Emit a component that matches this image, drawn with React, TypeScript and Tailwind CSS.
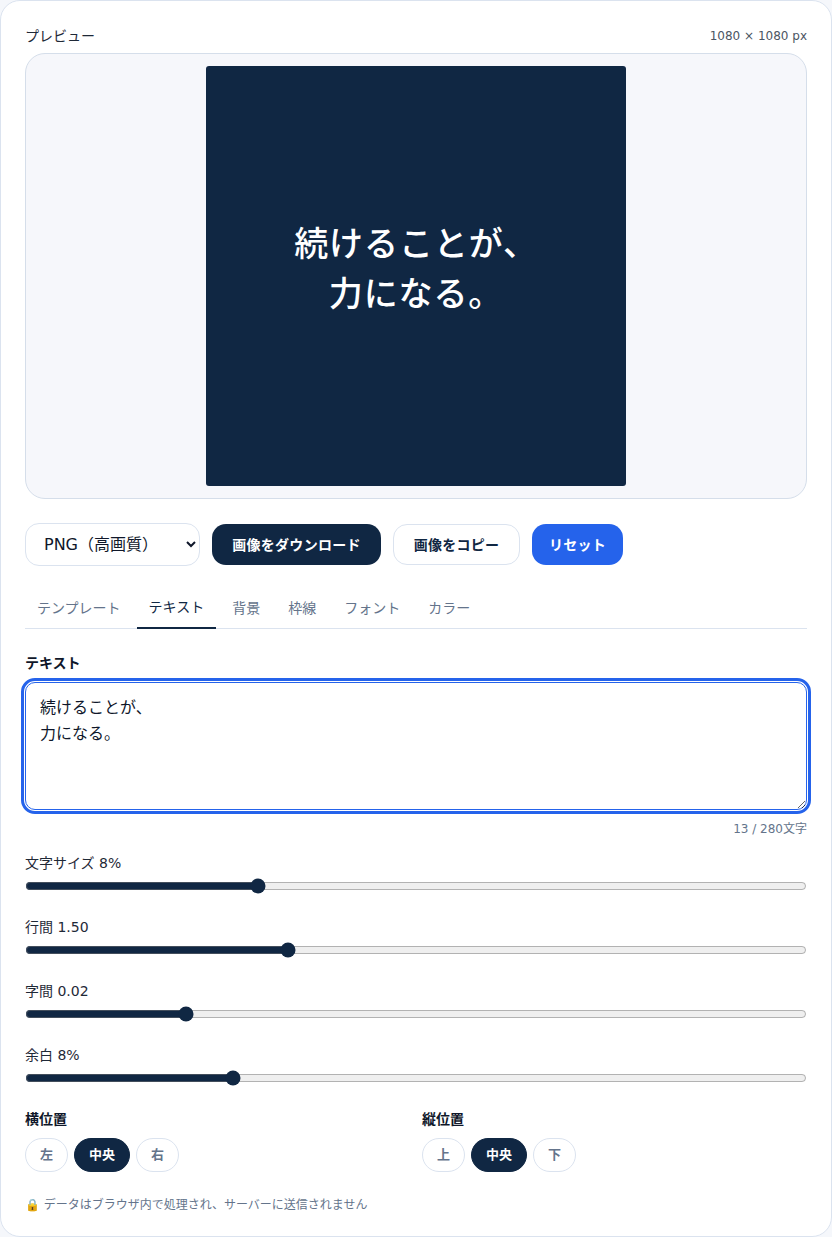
import React from "react";

const FONT = "font-['DejaVu_Sans','Noto_Sans_CJK_JP',sans-serif]";

const TABS = ["テンプレート", "テキスト", "背景", "枠線", "フォント", "カラー"];

const SLIDERS = [
  { label: "文字サイズ 8%", value: 29.4 },
  { label: "行間 1.50", value: 33.3 },
  { label: "字間 0.02", value: 20 },
  { label: "余白 8%", value: 26.1 },
];

export default function App() {
  return (
    <div className={`${FONT} bg-[#f5f7fb] text-[#0f172a]`}>
      <div className="h-[1237px] rounded-[20px] border border-[#dbe3ef] bg-white px-6 pt-[25px]">
        {/* preview */}
        <div className="flex h-[19px] items-center justify-between">
          <span className="text-sm text-[#1f2937]">プレビュー</span>
          <span className="text-xs text-[#4b5563]">1080 × 1080 px</span>
        </div>
        <div className="mt-2 flex justify-center rounded-[20px] border border-[#d5deea] bg-[#f6f7fb] p-3">
          <div className="flex h-[420px] w-[420px] items-center justify-center rounded-[3px] bg-[#102743] pb-[14px]">
            <p className="text-center text-[34px] leading-[50.4px] font-medium tracking-[0.9px] text-white">
              続けることが、
              <br />
              力になる。
            </p>
          </div>
        </div>

        {/* actions */}
        <div className="mt-6 flex items-center gap-3">
          <select className="h-[43px] w-[175px] rounded-[14px] border border-[#dbe3ef] bg-white pl-[14px] text-base text-[#0f172a]">
            <option>PNG（高画質）</option>
          </select>
          <button className="h-[41px] w-[169px] rounded-[14px] bg-[#102743] text-sm font-bold tracking-[0.28px] text-white">
            画像をダウンロード
          </button>
          <button className="h-[41px] w-[127px] rounded-[14px] border border-[#dbe3ef] bg-white text-sm font-bold tracking-[0.28px] text-[#102743]">
            画像をコピー
          </button>
          <button className="h-[41px] w-[91px] rounded-[14px] bg-[#2563eb] text-sm font-bold tracking-[0.28px] text-white">
            リセット
          </button>
        </div>

        {/* tabs */}
        <div className="mt-[21px] flex h-[42px] gap-1 border-b border-[#dbe3ef]">
          {TABS.map((t) => (
            <div
              key={t}
              className={`-mb-px flex items-center px-3 pb-px text-sm ${
                t === "テキスト"
                  ? "border-b-2 border-[#102743] text-[#102743]"
                  : "text-[#64748b]"
              }`}
            >
              {t}
            </div>
          ))}
        </div>

        {/* text */}
        <div className="mt-[25px] text-sm leading-[19px] font-bold text-[#0f172a]">テキスト</div>
        <textarea
          readOnly
          autoFocus
          className="mt-[9px] block h-[128px] w-full resize-y rounded-[10px] border border-[#2563eb] px-[14px] py-3 text-base leading-[26px] text-[#0f172a] outline-[3px] outline-offset-1 outline-[#2563eb]"
          value={"続けることが、\n力になる。"}
        />
        <div className="mt-[10px] text-right text-xs leading-[18px] text-[#64748b]">13 / 280文字</div>

        {/* sliders */}
        <div className="mt-4 flex flex-col gap-6">
          {SLIDERS.map((s) => (
            <div key={s.label}>
              <div className="text-sm leading-[19px] text-[#1f2937]">{s.label}</div>
              <input
                type="range"
                readOnly
                value={s.value}
                min={0}
                max={100}
                step={0.1}
                className="m-0 mt-[5px] block h-4 w-full accent-[#102743]"
              />
            </div>
          ))}
        </div>

        {/* position */}
        <div className="mt-6 grid grid-cols-2 gap-3">
          <PositionGroup title="横位置" options={["左", "中央", "右"]} />
          <PositionGroup title="縦位置" options={["上", "中央", "下"]} />
        </div>

        <div className="mt-6 text-xs leading-[18px] text-[#64748b]">
          🔒 データはブラウザ内で処理され、サーバーに送信されません
        </div>
      </div>
    </div>
  );
}

function PositionGroup({ title, options }: { title: string; options: string[] }) {
  return (
    <div>
      <div className="text-sm leading-[19px] font-bold text-[#0f172a]">{title}</div>
      <div className="mt-[9px] flex gap-[6px]">
        {options.map((o) => (
          <button
            key={o}
            className={`h-[34px] rounded-full border px-[14px] text-[13px] font-semibold ${
              o === "中央"
                ? "border-[#102743] bg-[#102743] text-white"
                : "border-[#dbe3ef] bg-white text-[#64748b]"
            }`}
          >
            {o}
          </button>
        ))}
      </div>
    </div>
  );
}
